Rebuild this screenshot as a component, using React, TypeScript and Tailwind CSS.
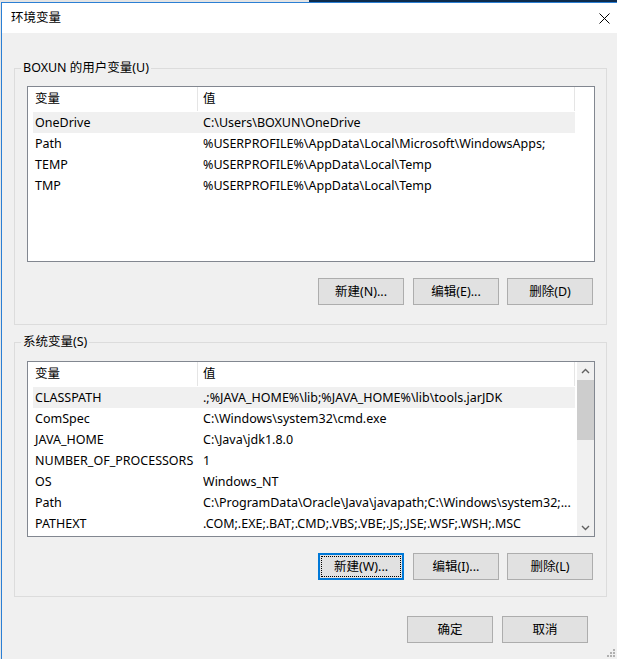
import React from 'react';

type Row = [string, string];

const userVars: Row[] = [
  ['OneDrive', 'C:\\Users\\BOXUN\\OneDrive'],
  ['Path', '%USERPROFILE%\\AppData\\Local\\Microsoft\\WindowsApps;'],
  ['TEMP', '%USERPROFILE%\\AppData\\Local\\Temp'],
  ['TMP', '%USERPROFILE%\\AppData\\Local\\Temp'],
];

const systemVars: Row[] = [
  ['CLASSPATH', '.;%JAVA_HOME%\\lib;%JAVA_HOME%\\lib\\tools.jarJDK'],
  ['ComSpec', 'C:\\Windows\\system32\\cmd.exe'],
  ['JAVA_HOME', 'C:\\Java\\jdk1.8.0'],
  ['NUMBER_OF_PROCESSORS', '1'],
  ['OS', 'Windows_NT'],
  ['Path', 'C:\\ProgramData\\Oracle\\Java\\javapath;C:\\Windows\\system32;...'],
  ['PATHEXT', '.COM;.EXE;.BAT;.CMD;.VBS;.VBE;.JS;.JSE;.WSF;.WSH;.MSC'],
];

function Btn({ label, focused = false, className = '' }: { label: string; focused?: boolean; className?: string }) {
  if (focused) {
    return (
      <div className={`w-[86px] h-[27px] border-2 border-[#0078d7] bg-[#e1e1e1] p-[1px] ${className}`}>
        <div className="w-full h-full border border-dotted border-black flex items-center justify-center">
          {label}
        </div>
      </div>
    );
  }
  return (
    <div className={`w-[86px] h-[27px] border border-[#adadad] bg-[#e1e1e1] flex items-center justify-center ${className}`}>
      {label}
    </div>
  );
}

function Scrollbar() {
  return (
    <div className="w-[17px] bg-[#f0f0f0] flex flex-col">
      <div className="h-[17px] flex items-center justify-center">
        <svg width="9" height="6" viewBox="0 0 9 6">
          <path d="M1 5 L4.5 1.5 L8 5" fill="none" stroke="#606060" strokeWidth="1.4" />
        </svg>
      </div>
      <div className="mt-[1px] h-[60px] bg-[#cdcdcd]" />
      <div className="flex-1" />
      <div className="h-[17px] flex items-center justify-center">
        <svg width="9" height="6" viewBox="0 0 9 6">
          <path d="M1 1 L4.5 4.5 L8 1" fill="none" stroke="#606060" strokeWidth="1.4" />
        </svg>
      </div>
    </div>
  );
}

function ListView({ rows, scroll = false }: { rows: Row[]; scroll?: boolean }) {
  return (
    <div className="w-[568px] h-[176px] border border-[#828790] bg-white flex">
      <div className="flex-1">
        {/* column header */}
        <div className="flex h-[24px] w-[547px]">
          <div className="w-[170px] pl-[7px] border-r border-[#e5e5e5] flex items-center">变量</div>
          <div className="flex-1 pl-[5px] border-r border-[#e5e5e5] flex items-center">值</div>
        </div>
        <div className="mt-[1px] ml-[5px] w-[542px]">
          {rows.map(([k, v], i) => (
            <div key={k + i} className={`h-[21px] flex items-center ${i === 0 ? 'bg-[#f0f0f0]' : ''}`}>
              <div className="w-[170px] pl-[2px] whitespace-nowrap">{k}</div>
              <div className="flex-1 whitespace-nowrap overflow-hidden">{v}</div>
            </div>
          ))}
        </div>
      </div>
      {scroll && <Scrollbar />}
    </div>
  );
}

function Grip() {
  const dots: [number, number][] = [
    [10, 0], [7, 3], [10, 3], [4, 6], [7, 6], [10, 6],
  ];
  return (
    <svg width="13" height="9" viewBox="0 0 13 9">
      {dots.map(([x, y], i) => (
        <rect key={i} x={x} y={y} width="2" height="2" fill="#b0b0b0" />
      ))}
    </svg>
  );
}

export default function App() {
  return (
    <div className="w-[617px] h-[659px] overflow-hidden bg-[#e6e6e6] text-[12.5px] leading-[16px] text-black font-['Noto_Sans','Noto_Sans_CJK_SC',sans-serif]">
      {/* desktop behind the window */}
      <div className="flex h-[2px]">
        <div className="w-[309px] bg-[#e4e4e4]" />
        <div className="flex-1 bg-[#0d2b4c]" />
      </div>
      <div className="ml-[1px] h-[657px] border-t border-l border-[#2b7fd4] bg-[#f0f0f0] flex flex-col">
        {/* title bar */}
        <div className="h-[30px] bg-white flex items-center justify-between pl-[9px] pr-[7px]">
          <span>环境变量</span>
          <svg width="11" height="11" viewBox="0 0 11 11">
            <path d="M0.5 0.5 L10.5 10.5 M10.5 0.5 L0.5 10.5" stroke="#000" strokeWidth="1" />
          </svg>
        </div>

        {/* user variables */}
        <fieldset className="mt-[27px] ml-[12px] w-[593px] border border-[#dcdcdc] pl-[12px] pt-[10px] pb-[19px]">
          <legend className="ml-[-6px] px-[2px]">BOXUN 的用户变量(U)</legend>
          <ListView rows={userVars} />
          <div className="mt-[16px] flex">
            <Btn label="新建(N)..." className="ml-[291px]" />
            <Btn label="编辑(E)..." className="ml-[9px]" />
            <Btn label="删除(D)" className="ml-[8px]" />
          </div>
        </fieldset>

        {/* system variables */}
        <fieldset className="mt-[9px] ml-[12px] w-[593px] border border-[#dcdcdc] pl-[12px] pt-[11px] pb-[16px]">
          <legend className="ml-[-6px] px-[2px]">系统变量(S)</legend>
          <ListView rows={systemVars} scroll />
          <div className="mt-[16px] flex">
            <Btn label="新建(W)..." focused className="ml-[291px]" />
            <Btn label="编辑(I)..." className="ml-[9px]" />
            <Btn label="删除(L)" className="ml-[8px]" />
          </div>
        </fieldset>

        {/* dialog buttons */}
        <div className="mt-[19px] flex">
          <Btn label="确定" className="ml-[405px]" />
          <Btn label="取消" className="ml-[9px]" />
        </div>
        <div className="flex-1 flex items-end justify-end pr-[1px] pb-[1px]">
          <Grip />
        </div>
      </div>
    </div>
  );
}
